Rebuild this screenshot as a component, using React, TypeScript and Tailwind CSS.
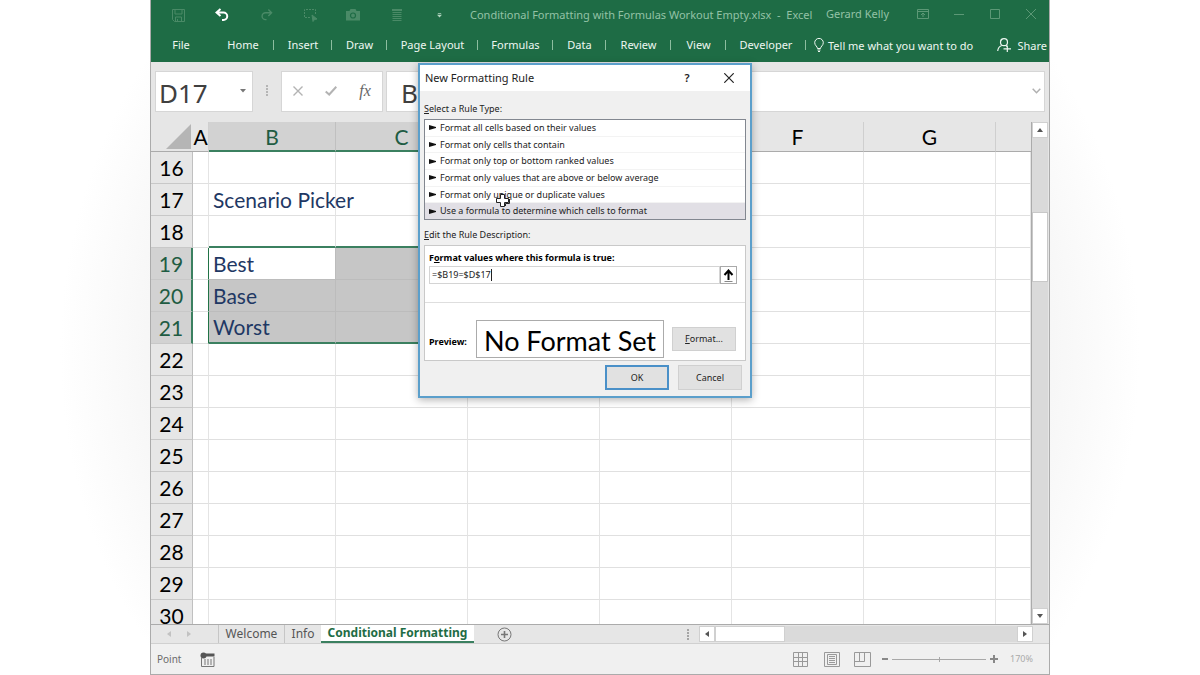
import { Fragment } from 'react';
import type { ReactNode } from 'react';

interface RibbonTab {
  label: string;
  width: string;
}

const RIBBON_TABS: RibbonTab[] = [
  { label: 'Home', width: 'w-[60px]' },
  { label: 'Insert', width: 'w-[58px]' },
  { label: 'Draw', width: 'w-[55px]' },
  { label: 'Page Layout', width: 'w-[91px]' },
  { label: 'Formulas', width: 'w-[75px]' },
  { label: 'Data', width: 'w-[53px]' },
  { label: 'Review', width: 'w-[65px]' },
  { label: 'View', width: 'w-[55px]' },
  { label: 'Developer', width: 'w-20' },
];

const COLUMNS = [
  { name: 'A', width: 'w-4' },
  { name: 'B', width: 'w-[127px]' },
  { name: 'C', width: 'w-[132px]' },
  { name: 'D', width: 'w-[132px]' },
  { name: 'E', width: 'w-[132px]' },
  { name: 'F', width: 'w-[132px]' },
  { name: 'G', width: 'w-[132px]' },
  { name: '', width: '' },
];

const ROWS = [16, 17, 18, 19, 20, 21, 22, 23, 24, 25, 26, 27, 28, 29, 30];

const CELL_TEXT: Record<string, string> = {
  B17: 'Scenario Picker',
  B19: 'Best',
  B20: 'Base',
  B21: 'Worst',
};

const RULE_TYPES = [
  'Format all cells based on their values',
  'Format only cells that contain',
  'Format only top or bottom ranked values',
  'Format only values that are above or below average',
  'Format only unique or duplicate values',
  'Use a formula to determine which cells to format',
];

function IconButton({ label, className, children }: { label: string; className: string; children: ReactNode }) {
  return (
    <button type="button" aria-label={label} className={`flex h-full items-center justify-center ${className}`}>
      {children}
    </button>
  );
}

function TitleBar() {
  return (
    <div className="flex h-[30px] items-center text-[#93c2a5]">
      <div className="ml-[3px] flex h-full items-center text-[#4a8a67]">
        <IconButton label="Save" className="w-12">
          <svg width="13" height="13" viewBox="0 0 13 13" fill="none" stroke="currentColor">
            <path d="M.5.5h12v12H2.5l-2-2zM3 .5v4.500h7V.5M3.500 12.500V8h6v4.500M5.500 10v2.500" />
          </svg>
        </IconButton>
        <IconButton label="Undo" className="w-10 text-white">
          <svg width="14" height="14" viewBox="0 0 14 14" fill="none" stroke="currentColor" strokeWidth="2">
            <path d="M5.500 1 1.500 4.500l4 3.500M2 4.500h6.500a3.700 3.700 0 0 1 0 7.500H7" />
          </svg>
        </IconButton>
        <IconButton label="Redo" className="w-12">
          <svg width="13" height="14" viewBox="0 0 14 14" fill="none" stroke="currentColor" strokeWidth="1.500">
            <path d="m9 1 3.500 3.500L9 8M12 4.500H6a3.700 3.700 0 0 0 0 7.500h1" />
          </svg>
        </IconButton>
        <IconButton label="Select objects" className="w-10">
          <svg width="15" height="14" viewBox="0 0 15 14" fill="none" stroke="currentColor">
            <path d="M7 9.500H1.500v-8h11v5" strokeDasharray="2 1" />
            <path d="m9 7 5 4-2.500.5L10 13.500z" fill="currentColor" />
          </svg>
        </IconButton>
        <IconButton label="Camera" className="w-[46px]">
          <svg width="14" height="12" viewBox="0 0 14 12" fill="currentColor">
            <path d="M4.500 0h5l1 2H14v9.500H0V2h3.500z" />
            <circle cx="7" cy="6.500" r="2.500" fill="none" stroke="#1e6c45" strokeWidth="1.200" />
          </svg>
        </IconButton>
        <IconButton label="Form" className="w-[42px]">
          <svg width="10" height="12" viewBox="0 0 10 12" fill="none" stroke="currentColor">
            <path d="M0 1h10" strokeWidth="2" />
            <path d="M.5 3.500h9M.5 5.500h9M.5 7.500h9M.5 9.500h9M.5 11.500h9" />
          </svg>
        </IconButton>
        <IconButton label="Customize toolbar" className="w-[42px] text-[#b4d5c1]">
          <svg width="5" height="5" viewBox="0 0 6 6" fill="currentColor">
            <path d="M1 0h4v1H1zM0 2h6L3 5.500z" />
          </svg>
        </IconButton>
      </div>
      <h1 className="ml-2.5 text-[11px] whitespace-pre">
        Conditional Formatting with Formulas Workout Empty.xlsx{'  -  '}Excel
      </h1>
      <div className="ml-auto flex h-full items-center pb-0.5">
        <span className="mr-4 text-[11px] whitespace-nowrap">Gerard Kelly</span>
        <div className="flex h-full items-center text-[#5c9876]">
          <IconButton label="Ribbon display options" className="w-9">
            <svg width="12" height="10" viewBox="0 0 12 10" fill="none" stroke="currentColor">
              <path d="M.5.5h11v9H.5zM.5 2.500h11M6 8V4M4 6l2-2 2 2" />
            </svg>
          </IconButton>
          <IconButton label="Minimize" className="w-9">
            <svg width="10" height="10" viewBox="0 0 10 10" stroke="currentColor">
              <path d="M0 5.500h10" />
            </svg>
          </IconButton>
          <IconButton label="Maximize" className="w-9">
            <svg width="10" height="10" viewBox="0 0 10 10" fill="none" stroke="currentColor">
              <path d="M.5.5h9v9h-9z" />
            </svg>
          </IconButton>
          <IconButton label="Close" className="w-9">
            <svg width="10" height="10" viewBox="0 0 10 10" stroke="currentColor">
              <path d="m0 0 10 10M10 0 0 10" />
            </svg>
          </IconButton>
        </div>
      </div>
    </div>
  );
}

function Ribbon() {
  return (
    <nav className="flex h-[30px] items-center text-[11px] text-[#eef7f1]">
      <button type="button" className="mr-0.5 w-[60px]">File</button>
      {RIBBON_TABS.map((tab, i) => (
        <Fragment key={tab.label}>
          <button type="button" className={`whitespace-nowrap ${tab.width}`}>{tab.label}</button>
          <span className={`h-2.5 w-px bg-[#8dbd9f] ${i === 0 ? '' : '-ml-px'}`} />
        </Fragment>
      ))}
      <button type="button" className="ml-2 flex items-center gap-1 whitespace-nowrap">
        <svg width="10" height="14" viewBox="0 0 10 14" fill="none" stroke="currentColor">
          <path d="M3.500 10.500C3.500 8.500.7 7.500.7 4.700a4.300 4.300 0 0 1 8.600 0c0 2.800-2.800 3.800-2.800 5.800zM3.500 12h3M4 13.500h2" />
        </svg>
        <span className="pt-0.5">Tell me what you want to do</span>
      </button>
      <button type="button" className="mr-0.5 ml-auto flex items-center gap-1.5">
        <svg width="14" height="14" viewBox="0 0 14 14" fill="none" stroke="currentColor" strokeWidth="1.200">
          <circle cx="7" cy="4.200" r="3.500" />
          <path d="M.7 13c.3-3 2-4.800 4-5.500M9 7.500l1 1M6.500 10.800H14M10.300 7.500V14" />
        </svg>
        <span className="pt-0.5">Share</span>
      </button>
    </nav>
  );
}

function FormulaBar() {
  return (
    <div className="flex h-[60px] items-center px-1 pb-0.5">
      <div className="flex h-[41px] w-[98px] items-center border border-[#d6d6d6] bg-white">
        <input
          aria-label="Name box"
          defaultValue="D17"
          className="w-[78px] bg-transparent pt-1 pl-[3px] text-[26px] leading-8 text-[#404040] outline-none"
        />
        <button type="button" aria-label="Open name list" className="flex w-5 justify-center">
          <svg width="6" height="4" viewBox="0 0 6 4" fill="#777"><path d="M0 0h6L3 3.500z" /></svg>
        </button>
      </div>
      <svg className="mx-3" width="4" height="12" viewBox="0 0 4 12" fill="#b5b5b5">
        <path d="M1 0h2v2H1zM1 3h2v2H1zM1 6h2v2H1zM1 9h2v2H1z" />
      </svg>
      <div className="flex h-[41px] w-[102px] items-center justify-around border border-[#d6d6d6] bg-white text-[#b3b3b3]">
        <button type="button" aria-label="Cancel entry">
          <svg width="10" height="10" viewBox="0 0 10 10" stroke="currentColor" strokeWidth="1.400">
            <path d="m.5.5 9 9M9.500.5l-9 9" />
          </svg>
        </button>
        <button type="button" aria-label="Accept entry">
          <svg width="12" height="10" viewBox="0 0 12 10" fill="none" stroke="currentColor" strokeWidth="2">
            <path d="m.7 5.500 3.500 3L11.300.8" />
          </svg>
        </button>
        <button type="button" className="font-['Liberation_Serif',serif] text-base text-[#666] italic">fx</button>
      </div>
      <div className="ml-[3px] flex h-[41px] flex-1 items-center border border-[#d6d6d6] bg-white">
        <input
          aria-label="Formula"
          defaultValue="B"
          className="min-w-0 flex-1 bg-transparent pt-1 pl-3.5 text-[26px] leading-8 text-[#404040] outline-none"
        />
        <button type="button" aria-label="Expand formula bar" className="flex w-4 justify-center">
          <svg width="9" height="6" viewBox="0 0 9 6" fill="none" stroke="#b0b0b0" strokeWidth="1.500">
            <path d="m.7.7 3.800 4L8.300.7" />
          </svg>
        </button>
      </div>
    </div>
  );
}

// B19:D21 is the selected range, with B19 as its active cell
function cellClasses(col: string, row: number) {
  const inColumns = col === 'B' || col === 'C' || col === 'D';
  const inRows = row >= 19 && row <= 21;
  if (!inColumns || !inRows) {
    return `bg-white ${inColumns && row === 18 ? 'border-b-2 border-b-[#3b8060]' : 'border-b-[#e0e0e0]'} ${
      col === 'A' && inRows ? 'border-r-[#217346]' : 'border-r-[#e4e4e4]'
    }`;
  }
  const fill = col === 'B' && row === 19 ? 'bg-white' : 'bg-[#c6c6c6]';
  const edge = row === 21 ? 'border-b-2 border-b-[#3b8060]' : 'border-b-[#bcbcbc]';
  return `${fill} ${edge} border-r-[#bcbcbc]`;
}

function Sheet() {
  return (
    <div className="flex min-h-0 flex-1">
      <div className="min-w-0 flex-1 overflow-hidden border-r border-[#ababab]">
        <table className="w-full table-fixed border-separate border-spacing-0 font-[Lato,sans-serif] text-[21px] leading-6">
          <thead>
            <tr className="h-[30px]">
              <th aria-label="Select all" className="w-[42px] border-b border-[#ababab] p-0">
                <svg className="ml-auto" width="27" height="26" viewBox="0 0 27 26" fill="#b5b5b5">
                  <path d="M25 0v25H0z" />
                </svg>
              </th>
              {COLUMNS.map(({ name, width }) => {
                const active = name === 'B' || name === 'C' || name === 'D';
                return (
                  <th
                    key={name}
                    className={`p-0 font-normal ${width} ${
                      active
                        ? 'border-b-2 border-r-[#c0c0c0] border-b-[#3b8060] bg-[#d2d2d2] pt-0.5 text-[#1f5c43]'
                        : 'border-b border-r-[#cfcfcf] border-b-[#ababab] text-black'
                    } ${name === '' ? '' : 'border-r'}`}
                  >
                    {name}
                  </th>
                );
              })}
            </tr>
          </thead>
          <tbody>
            {ROWS.map((row) => {
              const active = row >= 19 && row <= 21;
              return (
                <tr key={row} className="h-8">
                  <th
                    className={`border-b border-b-[#c8c8c8] p-0 font-normal ${
                      active
                        ? 'border-r-2 border-r-[#3b8060] bg-[#d2d2d2] text-[#1f5c43]'
                        : 'border-r border-r-[#c0c0c0] text-black'
                    }`}
                  >
                    {row}
                  </th>
                  {COLUMNS.map(({ name }) => (
                    <td
                      key={name}
                      className={`border-r border-b p-0 pl-1 whitespace-nowrap text-[#1f3864] ${cellClasses(name, row)}`}
                    >
                      {CELL_TEXT[`${name}${row}`]}
                    </td>
                  ))}
                </tr>
              );
            })}
          </tbody>
        </table>
      </div>
      {/* Vertical scroll bar */}
      <div className="mr-px flex w-4 flex-col bg-[#dadada]">
        <button type="button" aria-label="Scroll up" className="flex h-4 items-center justify-center border border-[#d0d0d0] bg-white">
          <svg width="6" height="4" viewBox="0 0 6 4" fill="#555"><path d="M0 4h6L3 0z" /></svg>
        </button>
        <div className="mt-[74px] h-[70px] border border-[#c8c8c8] bg-white" />
        <button type="button" aria-label="Scroll down" className="mt-auto flex h-4 items-center justify-center border border-[#d0d0d0] bg-white">
          <svg width="6" height="4" viewBox="0 0 6 4" fill="#555"><path d="M0 0h6L3 4z" /></svg>
        </button>
      </div>
    </div>
  );
}

function SheetTabs() {
  return (
    <div className="flex h-5 items-center border-y border-t-[#ababab] border-b-[#d0d0d0] text-xs text-[#555]">
      <div className="flex w-[67px] items-center gap-4 pl-4">
        <button type="button" aria-label="Previous sheet">
          <svg width="4" height="6" viewBox="0 0 4 6" fill="#c2c2c2"><path d="M4 0v6L0 3z" /></svg>
        </button>
        <button type="button" aria-label="Next sheet">
          <svg width="4" height="6" viewBox="0 0 4 6" fill="#c2c2c2"><path d="M0 0v6l4-3z" /></svg>
        </button>
      </div>
      <button type="button" className="h-full w-[67px] border-x border-[#c6c6c6] leading-4">Welcome</button>
      <button type="button" className="h-full w-9 leading-4">Info</button>
      <button type="button" className="h-full w-[153px] border-b-2 border-[#3b8060] bg-white leading-4 font-bold whitespace-nowrap text-[#1e6c45]">
        Conditional Formatting
      </button>
      <button type="button" aria-label="New sheet" className="ml-[23px]">
        <svg width="15" height="15" viewBox="0 0 15 15" fill="none" stroke="#777">
          <circle cx="7.500" cy="7.500" r="6.500" />
          <path d="M4 7.500h7M7.500 4v7" strokeWidth="1.600" />
        </svg>
      </button>
      <div className="ml-auto flex h-4 items-center">
        <svg className="mr-2.5" width="2" height="11" viewBox="0 0 2 11" fill="#a5a5a5">
          <path d="M0 0h2v2H0zM0 3h2v2H0zM0 6h2v2H0zM0 9h2v2H0z" />
        </svg>
        <div className="mr-4 flex h-4 w-[334px] bg-[#dadada]">
          <button type="button" aria-label="Scroll left" className="flex w-4 items-center justify-center border border-[#d0d0d0] bg-white">
            <svg width="4" height="6" viewBox="0 0 4 6" fill="#555"><path d="M4 0v6L0 3z" /></svg>
          </button>
          <div className="w-[70px] border border-[#d0d0d0] bg-white" />
          <button type="button" aria-label="Scroll right" className="ml-auto flex w-4 items-center justify-center border border-[#d0d0d0] bg-white">
            <svg width="4" height="6" viewBox="0 0 4 6" fill="#555"><path d="M0 0v6l4-3z" /></svg>
          </button>
        </div>
      </div>
    </div>
  );
}

function StatusBar() {
  return (
    <footer className="flex h-[30px] items-center bg-[#f0f0f0] pr-4 pl-1.5 text-[10px] text-[#6b6b6b]">
      <span className="w-[43px]">Point</span>
      <button type="button" aria-label="Record macro">
        <svg width="15" height="15" viewBox="0 0 15 15" fill="none" stroke="#777">
          <path d="M1.500 6v8.500h12.500V5M4 8h2M7 8h2M10 8h2M4 10h2M7 10h2M10 10h2M4 12h2M7 12h2M10 12h2" />
          <path d="M6 3h8.500" strokeWidth="3" stroke="#555" />
          <circle cx="3.500" cy="3.500" r="3" fill="#555" stroke="none" />
        </svg>
      </button>
      <div className="ml-auto flex items-center text-[#999]">
        <button type="button" aria-label="Normal view">
          <svg width="15" height="15" viewBox="0 0 15 15" fill="none" stroke="currentColor">
            <path d="M.5.5h14v14H.5zM.5 5.500h14M.5 9.500h14M5.500.5v14M9.500.5v14" />
          </svg>
        </button>
        <button type="button" aria-label="Page layout view" className="ml-4">
          <svg width="16" height="15" viewBox="0 0 16 15" fill="none" stroke="currentColor">
            <path d="M.5.5h15v14H.5zM3.500 2.500h9v10h-9zM5 4.500h6M5 6.500h6M5 8.500h6M5 10.500h6" />
          </svg>
        </button>
        <button type="button" aria-label="Page break view" className="ml-3.5">
          <svg width="17" height="15" viewBox="0 0 17 15" fill="none" stroke="currentColor">
            <path d="M.5.5h16v14H.5zM5.500.5v9M10.500.5v9M.5 9.500h10" />
          </svg>
        </button>
        <button type="button" aria-label="Zoom out" className="ml-[11px]">
          <svg width="6" height="8" viewBox="0 0 6 8" stroke="#888" strokeWidth="2"><path d="M0 4h6" /></svg>
        </button>
        <input
          type="range"
          aria-label="Zoom"
          min={10}
          max={400}
          defaultValue={170}
          className="mx-1 h-3 w-[94px] appearance-none bg-[linear-gradient(#a8a8a8,#a8a8a8),linear-gradient(#a8a8a8,#a8a8a8)] bg-[length:100%_1px,1px_5px] bg-center bg-no-repeat [&::-webkit-slider-thumb]:appearance-none"
        />
        <button type="button" aria-label="Zoom in">
          <svg width="8" height="8" viewBox="0 0 8 8" stroke="#888" strokeWidth="2"><path d="M0 4h8M4 0v8" /></svg>
        </button>
        <span className="ml-3 text-[9px] text-[#aaa]">170%</span>
      </div>
    </footer>
  );
}

function FormattingRuleDialog() {
  return (
    <section
      role="dialog"
      aria-labelledby="rule-title"
      className="absolute top-[63px] left-[267px] w-[334px] border-2 border-[#5b9fcb] bg-[#f0f0f0] text-[9px] text-[#222] shadow-[0_2px_8px_rgba(0,0,0,0.3)]"
    >
      <header className="flex h-[26px] items-center bg-white pl-[5px] text-[11px]">
        <h2 id="rule-title">New Formatting Rule</h2>
        <button type="button" aria-label="Help" className="ml-auto w-[42px] font-semibold">?</button>
        <button type="button" aria-label="Close dialog" className="flex w-[42px] justify-center">
          <svg width="10" height="10" viewBox="0 0 10 10" stroke="#222" strokeWidth="1.200">
            <path d="m.3.3 9.400 9.400M9.700.3.300 9.700" />
          </svg>
        </button>
      </header>
      <div className="px-1 pt-2.5">
        <h3 className="h-[18px] leading-4">
          <span className="underline">S</span>elect a Rule Type:
        </h3>
        <ul className="flex h-[101px] flex-col border border-[#828790] bg-white">
          {RULE_TYPES.map((rule, i) => (
            <li
              key={rule}
              className={`flex flex-1 ${i === RULE_TYPES.length - 1 ? 'bg-[#e1dfe5]' : 'border-b border-[#f3f3f3]'}`}
            >
              <button type="button" className="flex flex-1 items-center gap-1 pl-1 leading-3">
                <svg width="7" height="5" viewBox="0 0 7 5" fill="#111"><path d="M0 0v5l7-2V2z" /></svg>
                {rule}
              </button>
            </li>
          ))}
        </ul>
        <h3 className="mt-[7px] h-[18px] leading-4">
          <span className="underline">E</span>dit the Rule Description:
        </h3>
        <div className="border border-[#c9c9c9] bg-white">
          <div className="h-[57px] border-b border-[#dedede] px-1 pt-1">
            <label htmlFor="rule-formula" className="block h-4 leading-4 font-bold text-black">
              F<span className="underline">o</span>rmat values where this formula is true:
            </label>
            <div className="flex h-[18px] w-[308px]">
              <div className="flex flex-1 items-center border border-[#d4d4d4]">
                <input
                  id="rule-formula"
                  defaultValue="=$B19=$D$17"
                  className="field-sizing-content border-r border-[#222] pl-0.5 leading-3 outline-none"
                />
              </div>
              <button type="button" aria-label="Collapse dialog" className="flex w-[17px] items-center justify-center border border-[#aaa]">
                <svg width="11" height="13" viewBox="0 0 11 13" fill="none" stroke="#000" strokeWidth="2">
                  <path d="M5.500 11V2M1.500 6l4-4.500 4 4.500" />
                  <path d="M1.500 12.500h8" strokeWidth="1" stroke="#888" />
                </svg>
              </button>
            </div>
          </div>
          <div className="flex h-[57px] items-end px-1 pb-0.5">
            <span className="w-[47px] pb-2.5 font-bold text-black">Preview:</span>
            <div className="flex h-[38px] w-[188px] items-center justify-center border border-[#ababab] pt-1 font-[Lato,sans-serif] text-[27px] whitespace-nowrap text-black">
              No Format Set
            </div>
            <button type="button" className="mb-[7px] ml-2 h-6 w-16 border border-[#d0d0d0] bg-[#e1e1e1]">
              <span className="underline">F</span>ormat...
            </button>
          </div>
        </div>
      </div>
      <footer className="flex justify-end gap-[9px] px-2 pt-1 pb-1.5">
        <button type="button" className="h-[25px] w-16 border-2 border-[#4a90c8] bg-[#e1e1e1]">OK</button>
        <button type="button" className="h-[25px] w-16 border border-[#d0d0d0] bg-[#e1e1e1]">Cancel</button>
      </footer>
    </section>
  );
}

function CrossCursor() {
  return (
    <svg className="pointer-events-none absolute top-[193px] left-[344px]" width="16" height="16" viewBox="0 0 16 16">
      <path d="M5.500 1.500h4v4h4v4h-4v4h-4v-4h-4v-4h4z" fill="#fff" stroke="#222" />
      <path d="M10.500 13V10.500H14.500V6" fill="none" stroke="#222" />
    </svg>
  );
}

export default function App() {
  return (
    <div className="h-screen overflow-hidden bg-[radial-gradient(540px_540px_at_50%_52%,#f5f5f5_80%,#fff_100%)] font-['Noto_Sans',sans-serif]">
      <main className="relative mx-auto flex h-full w-3/4 flex-col border-x border-b border-[#ababab] bg-[#e6e6e6]">
        <div className="h-[62px] bg-[#1e6c45]">
          <TitleBar />
          <Ribbon />
        </div>
        <FormulaBar />
        <Sheet />
        <SheetTabs />
        <StatusBar />
        <FormattingRuleDialog />
        <CrossCursor />
      </main>
    </div>
  );
}
